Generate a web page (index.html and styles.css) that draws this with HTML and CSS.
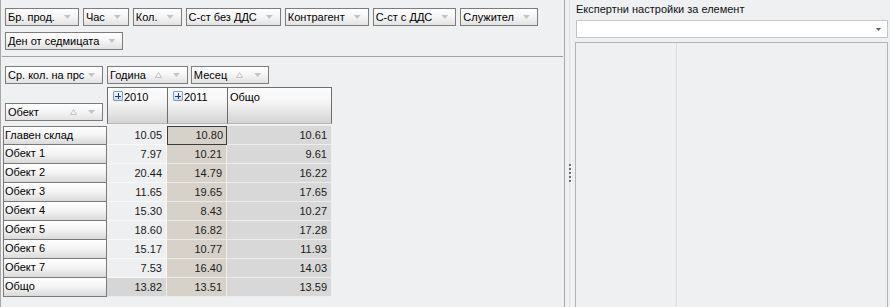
FILE: index.html
```html
<!DOCTYPE html>
<html lang="bg">
<head>
    <meta charset="UTF-8">
    <meta name="viewport" content="width=device-width, initial-scale=1.0">
    <title>Справка - обобщена таблица</title>
    <link rel="stylesheet" href="styles.css">
</head>
<body>
    <div class="app">
        <!-- Лява част: обобщена таблица -->
        <section class="pivot-panel">
            <div class="filter-area">
                <span class="field">Бр. прод.<i class="arrow"></i></span>
                <span class="field">Час<i class="arrow"></i></span>
                <span class="field">Кол.<i class="arrow"></i></span>
                <span class="field">С-ст без ДДС<i class="arrow"></i></span>
                <span class="field">Контрагент<i class="arrow"></i></span>
                <span class="field">С-ст с ДДС<i class="arrow"></i></span>
                <span class="field">Служител<i class="arrow"></i></span>
                <span class="field">Ден от седмицата<i class="arrow"></i></span>
            </div>

            <div class="pivot-grid">
                <div class="data-fields">
                    <span class="field field-wide"><span class="field-text">Ср. кол. на прс</span><i class="arrow"></i></span>
                </div>
                <div class="column-fields">
                    <span class="field">Година<svg class="sort" width="7" height="6" viewBox="0 0 7 6"><path d="M3.5 0.5 L6.5 5.5 L0.5 5.5 Z" /></svg><i class="arrow"></i></span>
                    <span class="field">Месец<svg class="sort" width="7" height="6" viewBox="0 0 7 6"><path d="M3.5 0.5 L6.5 5.5 L0.5 5.5 Z" /></svg><i class="arrow"></i></span>
                </div>

                <div class="corner">
                    <span class="field field-wide"><span class="field-text">Обект</span><svg class="sort" width="7" height="6" viewBox="0 0 7 6"><path d="M3.5 0.5 L6.5 5.5 L0.5 5.5 Z" /></svg><i class="arrow"></i></span>
                </div>
                <div class="col-head first"><i class="expand"></i>2010</div>
                <div class="col-head"><i class="expand"></i>2011</div>
                <div class="col-head last">Общо</div>

                <div class="row-head first">Главен склад</div>
                <div class="cell c2010">10.05</div>
                <div class="cell c2011 selected">10.80</div>
                <div class="cell ctotal">10.61</div>

                <div class="row-head">Обект 1</div>
                <div class="cell c2010">7.97</div>
                <div class="cell c2011">10.21</div>
                <div class="cell ctotal">9.61</div>

                <div class="row-head">Обект 2</div>
                <div class="cell c2010">20.44</div>
                <div class="cell c2011">14.79</div>
                <div class="cell ctotal">16.22</div>

                <div class="row-head">Обект 3</div>
                <div class="cell c2010">11.65</div>
                <div class="cell c2011">19.65</div>
                <div class="cell ctotal">17.65</div>

                <div class="row-head">Обект 4</div>
                <div class="cell c2010">15.30</div>
                <div class="cell c2011">8.43</div>
                <div class="cell ctotal">10.27</div>

                <div class="row-head">Обект 5</div>
                <div class="cell c2010">18.60</div>
                <div class="cell c2011">16.82</div>
                <div class="cell ctotal">17.28</div>

                <div class="row-head">Обект 6</div>
                <div class="cell c2010">15.17</div>
                <div class="cell c2011">10.77</div>
                <div class="cell ctotal">11.93</div>

                <div class="row-head">Обект 7</div>
                <div class="cell c2010">7.53</div>
                <div class="cell c2011">16.40</div>
                <div class="cell ctotal">14.03</div>

                <div class="row-head">Общо</div>
                <div class="cell c2010 total">13.82</div>
                <div class="cell c2011 total">13.51</div>
                <div class="cell ctotal total">13.59</div>
            </div>
        </section>

        <!-- Разделител -->
        <div class="splitter">
            <div class="grip">
                <i></i><i></i><i></i><i></i><i></i>
            </div>
        </div>

        <!-- Дясна част: експертни настройки -->
        <section class="expert-panel">
            <div class="expert-title">Експертни настройки за елемент</div>
            <div class="combo"><i class="combo-arrow"></i></div>
            <div class="property-grid">
                <div class="property-names"></div>
                <div class="property-values"></div>
            </div>
        </section>
    </div>
</body>
</html>
```

FILE: styles.css
```css
* {
    box-sizing: border-box;
}
html, body {
    margin: 0;
    padding: 0;
    height: 100%;
    overflow: hidden;
}
body {
    font-family: "Liberation Sans", Arial, sans-serif;
    font-size: 11px;
    color: #000;
    background-color: #eff0f2;
}
.app {
    display: flex;
    height: 100%;
}

/* Лява част */
.pivot-panel {
    width: 565px;
    border-left: 1px solid #a8a8a8;
    border-right: 1px solid #a8a8a8;
}
.filter-area {
    display: flex;
    flex-wrap: wrap;
    gap: 6px 4px;
    margin: 0 1px;
    padding: 8px 3px 6px;
    border-bottom: 1px solid #a0a0a0;
}
.field {
    display: inline-flex;
    align-items: center;
    height: 18px;
    padding: 0 7px 0 2px;
    border: 1px solid #7c7c7c;
    background: linear-gradient(#ffffff, #f6f6f6 45%, #e2e2e2);
    white-space: nowrap;
    line-height: 16px;
}
.field-wide {
    width: 98px;
}
.field-text {
    flex: 1;
}
.arrow {
    display: block;
    width: 7px;
    height: 4px;
    margin-left: 9px;
    background: #c4c4c4;
    clip-path: polygon(0 0, 100% 0, 50% 100%);
}
.field-wide .field-text + .arrow {
    margin-left: 3px;
}
.sort {
    display: block;
    margin-left: 9px;
    fill: none;
    stroke: #c4c4c4;
    stroke-width: 1;
}
.sort + .arrow {
    margin-left: 11px;
}

/* Обобщена таблица */
.pivot-grid {
    display: grid;
    grid-template-columns: 104px 60px 60px 105px;
    grid-template-rows: 21px 39px repeat(9, 19px);
    margin-top: 9px;
    padding-left: 2px;
}
.data-fields {
    padding-left: 2px;
}
.column-fields {
    grid-column: 2 / 5;
    display: flex;
    gap: 3px;
}
.corner {
    display: flex;
    align-items: flex-end;
    padding: 0 0 5px 2px;
}
.col-head {
    height: 37px;
    padding: 4px 2px;
    border-top: 1px solid #6e6e6e;
    border-left: 1px solid #6e6e6e;
    border-bottom: 1px solid #b8b8b8;
    background: linear-gradient(#fdfdfd, #f5f5f5 40%, #d4d4d4);
    display: flex;
    align-items: flex-start;
    line-height: 11px;
}
.col-head.last {
    border-right: 1px solid #6e6e6e;
}
.expand {
    display: block;
    width: 10px;
    height: 10px;
    margin: -1px 1px 0 3px;
    border: 1px solid #7d9cc4;
    border-radius: 1px;
    background:
        linear-gradient(#1d3f6e, #1d3f6e) center / 6px 1px no-repeat,
        linear-gradient(#1d3f6e, #1d3f6e) center / 1px 6px no-repeat,
        linear-gradient(#f4f8fd, #cfdcee);
}
.row-head {
    grid-column: 1;
    padding-left: 1px;
    border: 1px solid #7a7a7a;
    border-top: none;
    background: linear-gradient(#ffffff, #f3f3f3 50%, #dadada);
    line-height: 17px;
    white-space: nowrap;
}
.row-head.first {
    border-top: 1px solid #7a7a7a;
}
.cell {
    text-align: right;
    padding-right: 4px;
    line-height: 18px;
    color: #1a1a1a;
    border-bottom: 1px solid rgba(255, 255, 255, 0.55);
    border-right: 1px solid rgba(255, 255, 255, 0.55);
}
.c2010 {
    background-color: #eeeff1;
}
.c2011 {
    background-color: #d6d2ca;
}
.ctotal {
    background-color: #d8d8d8;
}
.c2010.total {
    background-color: #d6d6d6;
}
.cell.selected {
    border: 1px solid #3c3c3c;
    line-height: 17px;
    padding-right: 3px;
}

/* Разделител */
.splitter {
    width: 10px;
    padding-top: 164px;
    background: linear-gradient(90deg, transparent 4px, #d8d9dd 4px, #e6e7ea 5px, #fbfbfb 7px, #dfe0e3 8px, transparent 8px);
}
.grip {
    display: flex;
    flex-direction: column;
    gap: 2px;
    padding-left: 4px;
}
.grip i {
    display: block;
    width: 2px;
    height: 2px;
    background: #6e6e6e;
    box-shadow: 1px 1px 0 #ffffff;
}

/* Дясна част */
.expert-panel {
    flex: 1;
    display: flex;
    flex-direction: column;
    padding: 2px 2px 0 0;
}
.expert-title {
    padding-left: 1px;
    line-height: 14px;
    color: #111;
}
.combo {
    position: relative;
    height: 18px;
    margin: 4px 0 0 1px;
    background: #ffffff;
    border: 1px solid #c6c6c6;
}
.combo-arrow {
    position: absolute;
    right: 6px;
    top: 7px;
    width: 5px;
    height: 3px;
    background: #5e5e5e;
    clip-path: polygon(0 0, 100% 0, 50% 100%);
}
.property-grid {
    flex: 1;
    display: flex;
    margin-top: 4px;
    border: 1px solid #b4b4b4;
    border-bottom: none;
}
.property-names {
    width: 101px;
    border-right: 1px solid #dadbdd;
}
.property-values {
    flex: 1;
}
```
